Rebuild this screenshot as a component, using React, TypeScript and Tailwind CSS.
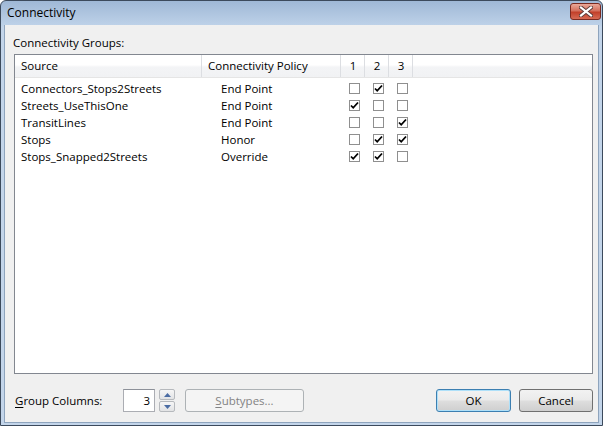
import React from "react";

const rows: { src: string; policy: string; c: [boolean, boolean, boolean] }[] = [
  { src: "Connectors_Stops2Streets", policy: "End Point", c: [false, true, false] },
  { src: "Streets_UseThisOne", policy: "End Point", c: [true, false, false] },
  { src: "TransitLines", policy: "End Point", c: [false, false, true] },
  { src: "Stops", policy: "Honor", c: [false, true, true] },
  { src: "Stops_Snapped2Streets", policy: "Override", c: [true, true, false] },
];

function Check({ on }: { on: boolean }) {
  return (
    <div className="w-[11px] h-[11px] border border-[#8f8f8f] bg-white flex items-center justify-center">
      {on && (
        <svg width="9" height="9" viewBox="0 0 9 9">
          <path d="M1 4.5 L3.2 6.8 L8 1.5" stroke="#000" strokeWidth="1.8" fill="none" />
        </svg>
      )}
    </div>
  );
}

export default function App() {
  return (
    <div
      className="w-[606px] h-[426px] bg-white text-[11.5px] text-black"
      style={{ fontFamily: '"Open Sans", "Noto Sans", sans-serif' }}
    >
      <div className="w-[603px] h-[426px] rounded-t-[6px] border border-[#3c4a5c] bg-[linear-gradient(to_bottom,#9fb8d6_0px,#bdd1e8_24px,#c3d5ea_26px,#c3d5ea_100%)] flex flex-col">
        <div className="h-[24px] flex items-center justify-between pl-[6px] pr-[1px]">
          <span className="text-[12px] text-black leading-none">Connectivity</span>
          <div className="w-[31px] h-[17px] mt-[-3px] rounded-[3px] border border-[#7a2a20] bg-[linear-gradient(to_bottom,#e9a899_0%,#d4705d_45%,#c2402a_55%,#d66b55_100%)] flex items-center justify-center">
            <svg width="14" height="11" viewBox="0 0 14 11">
              <path d="M2 1.5 L12 9.5 M12 1.5 L2 9.5" stroke="#5a3a38" strokeWidth="4" strokeLinecap="square" />
              <path d="M2 1.5 L12 9.5 M12 1.5 L2 9.5" stroke="#ffffff" strokeWidth="2.2" strokeLinecap="square" />
            </svg>
          </div>
        </div>
        <div className="flex-1 mx-[3px] mb-[2px] bg-[#f0f0f0] border border-[#8ea4bd] border-t-0 flex flex-col">
          <div className="pl-[8px] pt-[10px] leading-[16px]">Connectivity Groups:</div>
          <div className="ml-[9px] mt-[3px] w-[579px] h-[320px] border border-[#828790] bg-white flex flex-col">
            <div className="h-[23px] flex border-b border-[#e5e5e5] bg-[linear-gradient(to_bottom,#ffffff_0%,#ffffff_45%,#f3f4f6_55%,#f1f2f4_100%)]">
              <div className="w-[187px] border-r border-[#dcdee2] pl-[6px] flex items-center">Source</div>
              <div className="w-[139px] border-r border-[#dcdee2] pl-[6px] flex items-center">Connectivity Policy</div>
              <div className="w-[24px] border-r border-[#dcdee2] flex items-center justify-center pl-[1px]">1</div>
              <div className="w-[24px] border-r border-[#dcdee2] flex items-center justify-center pl-[1px]">2</div>
              <div className="w-[24px] border-r border-[#dcdee2] flex items-center justify-center pl-[1px]">3</div>
              <div className="flex-1" />
            </div>
            <div className="pt-[2px] flex flex-col">
              {rows.map((r) => (
                <div key={r.src} className="h-[17px] flex items-center">
                  <div className="w-[187px] pl-[6px] leading-[17px]">{r.src}</div>
                  <div className="w-[139px] pl-[19px] leading-[17px]">{r.policy}</div>
                  {r.c.map((v, i) => (
                    <div key={i} className="w-[24px] pl-[8px] flex items-center">
                      <Check on={v} />
                    </div>
                  ))}
                </div>
              ))}
            </div>
          </div>
          <div className="mt-[15px] flex items-center h-[23px] pl-[10px]">
            <span className="w-[108px]">
              <span className="underline underline-offset-2">G</span>roup Columns:
            </span>
            <div className="w-[32px] h-[23px] border border-[#abadb3] border-t-[#8d9199] bg-white flex items-center justify-end pr-[4px]">
              3
            </div>
            <div className="ml-[4px] w-[16px] h-[23px] flex flex-col justify-between">
              <div className="h-[11px] border border-[#b6b9bd] rounded-[2px] bg-[linear-gradient(to_bottom,#f6f6f6,#e2e3e5)] flex items-center justify-center">
                <svg width="7" height="4" viewBox="0 0 7 4"><path d="M0 4 L3.5 0 L7 4Z" fill="#4b6ca3" /></svg>
              </div>
              <div className="h-[11px] border border-[#b6b9bd] rounded-[2px] bg-[linear-gradient(to_bottom,#f6f6f6,#e2e3e5)] flex items-center justify-center">
                <svg width="7" height="4" viewBox="0 0 7 4"><path d="M0 0 L3.5 4 L7 0Z" fill="#4b6ca3" /></svg>
              </div>
            </div>
            <div className="ml-[10px] w-[119px] h-[23px] rounded-[3px] border border-[#adb2b5] bg-[#f4f4f4] text-[#838383] flex items-center justify-center">
              <span>
                <span className="underline underline-offset-2">S</span>ubtypes...
              </span>
            </div>
            <div className="flex-1" />
            <div className="w-[75px] h-[23px] rounded-[3px] border border-[#3c7fb1] bg-[linear-gradient(to_bottom,#f2f2f2_0%,#ebebeb_45%,#dddddd_55%,#cfcfcf_100%)] shadow-[inset_0_0_0_1px_#aee0f9] flex items-center justify-center">
              OK
            </div>
            <div className="ml-[8px] mr-[5px] w-[74px] h-[23px] rounded-[3px] border border-[#707070] bg-[linear-gradient(to_bottom,#f2f2f2_0%,#ebebeb_45%,#dddddd_55%,#cfcfcf_100%)] flex items-center justify-center">
              Cancel
            </div>
          </div>
        </div>
      </div>
    </div>
  );
}
